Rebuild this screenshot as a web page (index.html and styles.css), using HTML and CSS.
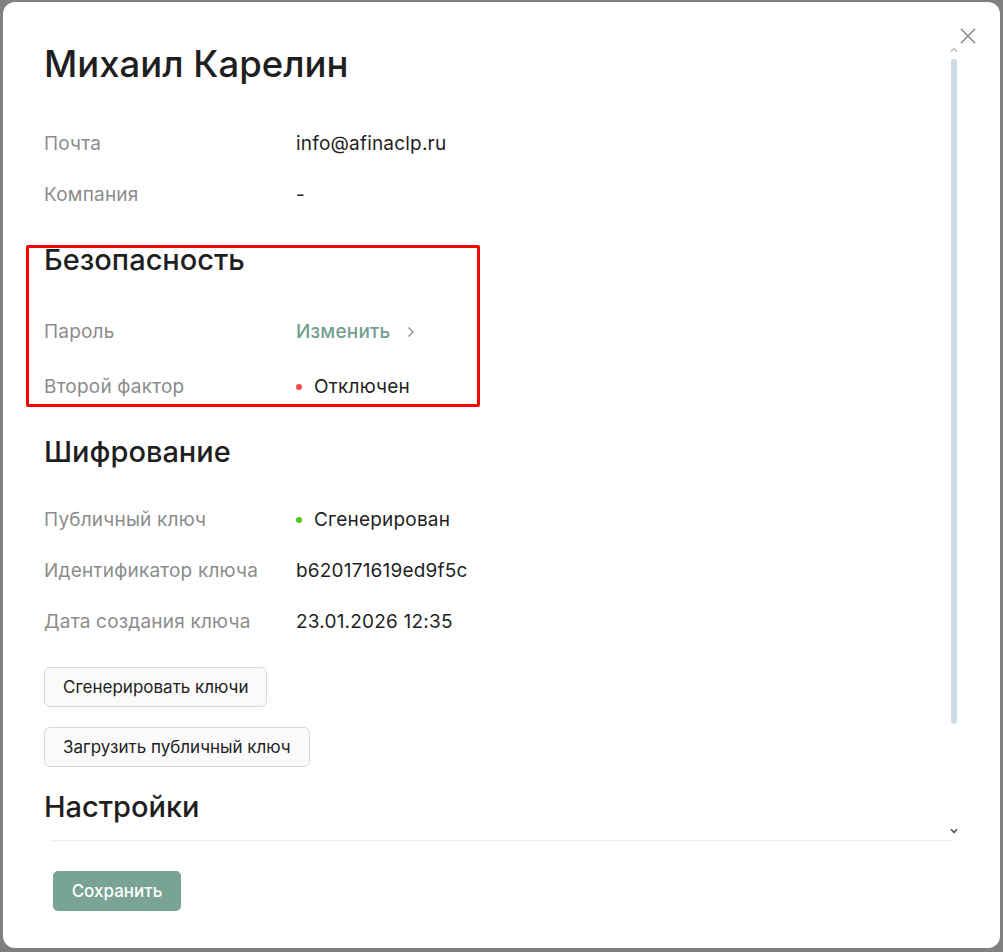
FILE: index.html
```html
<!DOCTYPE html>
<html lang="ru">
<head>
    <meta charset="UTF-8">
    <meta name="viewport" content="width=device-width, initial-scale=1.0">
    <title>Михаил Карелин</title>
    <link rel="stylesheet" href="styles.css">
</head>
<body>
    <div class="modal">
        <button class="close" aria-label="Закрыть">
            <svg width="16" height="16" viewBox="0 0 16 16"><path d="M1 1L15 15M15 1L1 15" stroke="#8a8a8a" stroke-width="1.6" fill="none"/></svg>
        </button>

        <div class="modal-body">
            <div class="content">
                <h1 class="title">Михаил Карелин</h1>

                <div class="rows">
                    <div class="row">
                        <span class="label">Почта</span>
                        <span class="value">info@afinaclp.ru</span>
                    </div>
                    <div class="row">
                        <span class="label">Компания</span>
                        <span class="value">-</span>
                    </div>
                </div>

                <h2 class="section">Безопасность</h2>
                <div class="rows rows-tall">
                    <div class="row">
                        <span class="label">Пароль</span>
                        <a class="link" href="#">Изменить
                            <svg width="8" height="12" viewBox="0 0 8 12"><path d="M1.5 1.5L6 6L1.5 10.5" stroke="#8a8a8a" stroke-width="1.3" fill="none"/></svg>
                        </a>
                    </div>
                    <div class="row">
                        <span class="label">Второй фактор</span>
                        <span class="value"><i class="dot dot-off"></i>Отключен</span>
                    </div>
                </div>

                <h2 class="section">Шифрование</h2>
                <div class="rows">
                    <div class="row">
                        <span class="label">Публичный ключ</span>
                        <span class="value"><i class="dot dot-on"></i>Сгенерирован</span>
                    </div>
                    <div class="row">
                        <span class="label">Идентификатор ключа</span>
                        <span class="value">b620171619ed9f5c</span>
                    </div>
                    <div class="row">
                        <span class="label">Дата создания ключа</span>
                        <span class="value">23.01.2026 12:35</span>
                    </div>
                </div>

                <div class="actions">
                    <button class="btn">Сгенерировать ключи</button>
                    <button class="btn">Загрузить публичный ключ</button>
                </div>

                <h2 class="section">Настройки</h2>
            </div>

            <div class="scrollbar">
                <svg class="sb-up" width="8" height="5" viewBox="0 0 8 5"><path d="M1 4.5L4 1.5L7 4.5" stroke="#b5b5b5" stroke-width="1.2" fill="none"/></svg>
                <span class="sb-thumb"></span>
                <svg class="sb-down" width="8" height="6" viewBox="0 0 8 6"><path d="M1 1.2L4 4.5L7 1.2" stroke="#555" stroke-width="1.6" fill="none"/></svg>
            </div>
        </div>

        <div class="modal-footer">
            <button class="btn-primary">Сохранить</button>
        </div>

        <div class="highlight"></div>
    </div>
</body>
</html>
```

FILE: styles.css
```css
html, body {
    height: 100%;
}
body {
    margin: 0;
    background-color: #808080;
    font-family: Inter, "Noto Sans", sans-serif;
    color: #1f1f1f;
}
.modal {
    position: relative;
    box-sizing: border-box;
    margin: 2px 3px 0 3px;
    height: 946px;
    background-color: #ffffff;
    border-radius: 12px;
    display: flex;
    flex-direction: column;
}
.close {
    position: absolute;
    top: 26px;
    right: 24px;
    padding: 0;
    border: none;
    background: none;
    width: 16px;
    height: 16px;
    cursor: pointer;
}
.close svg {
    display: block;
}

/* тело с прокруткой */
.modal-body {
    height: 838px;
    display: flex;
    overflow: hidden;
}
.content {
    flex: 1;
    padding: 40px 0 0 41px;
    overflow: hidden;
}
.scrollbar {
    width: 12px;
    margin-right: 40px;
    padding-top: 45px;
    display: flex;
    flex-direction: column;
    align-items: center;
}
.sb-up {
    display: block;
}
.sb-thumb {
    display: block;
    width: 6px;
    height: 665px;
    margin-top: 7px;
    background-color: #cfdbe5;
    border-radius: 3px;
}
.sb-down {
    display: block;
    margin-top: auto;
    margin-bottom: 6px;
}

.title {
    margin: 0;
    font-size: 36.5px;
    line-height: 44px;
    font-weight: 500;
}
.section {
    margin: 22px 0 0 0;
    font-size: 29px;
    line-height: 36px;
    font-weight: 500;
}
.rows {
    margin-top: 24px;
}
.title + .rows {
    margin-top: 32px;
}
.row {
    display: grid;
    grid-template-columns: 252px 1fr;
    align-items: center;
    height: 51px;
    font-size: 19px;
    letter-spacing: 0.2px;
}
.rows-tall {
    margin-top: 26px;
}
.rows-tall .row {
    height: 55px;
}
.rows-tall + .section {
    margin-top: 20px;
}
.label {
    color: #8c8c8c;
}
.value {
    display: flex;
    align-items: center;
    color: #1f1f1f;
}
.link {
    display: flex;
    align-items: center;
    gap: 16px;
    color: #72a08f;
    text-decoration: none;
    font-weight: 500;
}
.dot {
    display: inline-block;
    width: 6px;
    height: 6px;
    border-radius: 50%;
    margin-right: 12px;
}
.dot-off {
    background-color: #f5484a;
}
.dot-on {
    background-color: #52c41a;
}

.actions {
    margin-top: 20px;
    display: flex;
    flex-direction: column;
    align-items: flex-start;
    gap: 20px;
}
.btn {
    height: 40px;
    padding: 0 18px;
    font-family: inherit;
    font-size: 17px;
    color: #222;
    background-color: #fafafa;
    border: 1px solid #d9d9d9;
    border-radius: 6px;
    cursor: pointer;
}

.modal-footer {
    margin: 0 48px 0 49px;
    padding: 30px 0 0 1px;
    border-top: 1px solid #ececec;
}
.btn-primary {
    width: 128px;
    height: 40px;
    font-family: inherit;
    font-size: 17px;
    font-weight: 500;
    color: #ffffff;
    background-color: #79a394;
    border: none;
    border-radius: 5px;
    cursor: pointer;
}

/* красная рамка поверх блока безопасности */
.highlight {
    position: absolute;
    left: 23px;
    top: 243px;
    width: 454px;
    height: 162px;
    box-sizing: border-box;
    border: 3px solid #ff0000;
    border-radius: 2px;
    pointer-events: none;
}
```
